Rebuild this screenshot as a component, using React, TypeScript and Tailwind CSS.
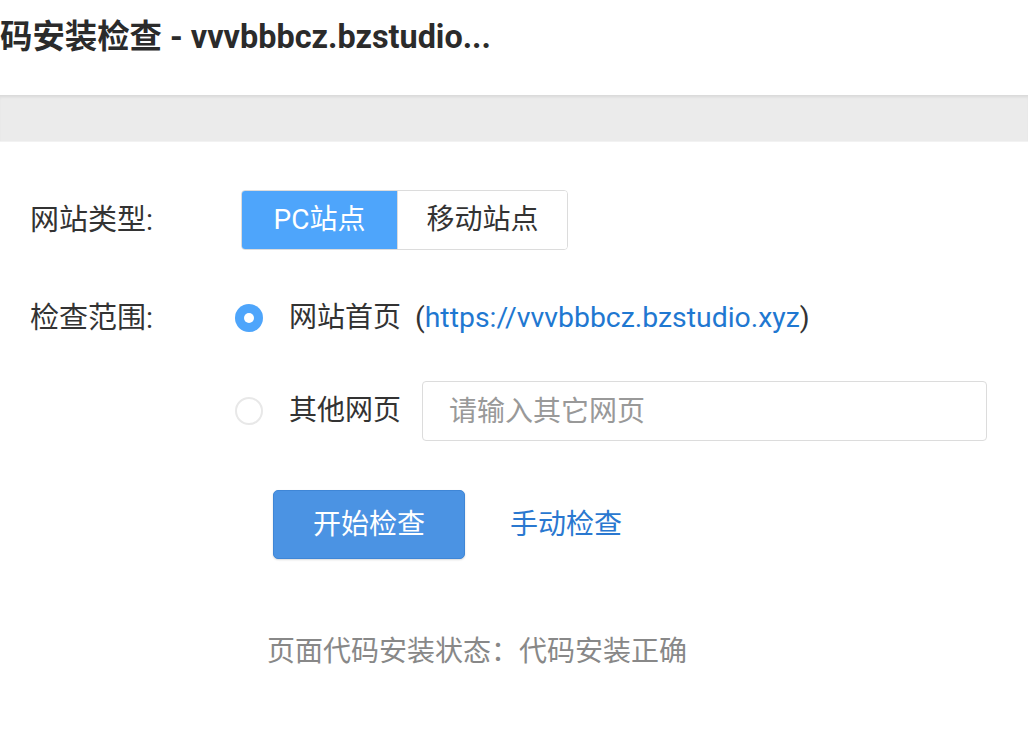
import { useState } from 'react';

const cjk = "font-['Roboto','Noto_Sans_CJK_SC',sans-serif]";

export default function App() {
    const [siteType, setSiteType] = useState<'pc' | 'mobile'>('pc');
    const [scope, setScope] = useState<'home' | 'other'>('home');

    return (
        <div className={`w-[1028px] h-[739px] overflow-hidden bg-white text-[#333] ${cjk}`}>
            {/* Header */}
            <div className="h-[95px] flex items-start pt-[13px] overflow-hidden">
                <h1 className="text-[32.4px] leading-[48px] font-bold text-[#2b2b2b] whitespace-nowrap">
                    码安装检查 - vvvbbbcz.bzstudio...
                </h1>
            </div>

            {/* Gray strip */}
            <div className="h-[47px] bg-[#ebebeb] shadow-[inset_0_3px_3px_-1px_rgba(0,0,0,0.08)] border-b border-[#f2f2f2]" />

            {/* Form */}
            <div className="pl-[30px] pt-[48px]">
                {/* Site type */}
                <div className="flex items-center h-[60px]">
                    <div className="w-[211px] text-[29px] leading-none text-[#333]">网站类型:</div>
                    <div className="flex h-[60px] rounded-[4px] overflow-hidden border border-[#dcdcdc]">
                        <button
                            onClick={() => setSiteType('pc')}
                            className={`w-[155px] text-[28px] ${siteType === 'pc' ? 'bg-[#4ea5fb] text-white' : 'bg-white text-[#333]'}`}
                        >
                            PC站点
                        </button>
                        <button
                            onClick={() => setSiteType('mobile')}
                            className={`w-[170px] text-[28px] border-l border-[#dcdcdc] ${siteType === 'mobile' ? 'bg-[#4ea5fb] text-white' : 'bg-white text-[#333]'}`}
                        >
                            移动站点
                        </button>
                    </div>
                </div>

                {/* Scope */}
                <div className="flex items-center h-[40px] mt-[48px]">
                    <div className="w-[205px] text-[29px] leading-none text-[#333]">检查范围:</div>
                    <button onClick={() => setScope('home')} className="flex items-center">
                        <Radio checked={scope === 'home'} />
                        <span className="ml-[26px] text-[28px] text-[#333]">网站首页</span>
                    </button>
                    <span className="ml-[14px] text-[28.4px] text-[#333]">
                        (<a className="text-[#1f78d1]">https://vvvbbbcz.bzstudio.xyz</a>)
                    </span>
                </div>

                <div className="flex items-center h-[60px] mt-[43px] pl-[205px]">
                    <button onClick={() => setScope('other')} className="flex items-center">
                        <Radio checked={scope === 'other'} />
                        <span className="ml-[26px] text-[28px] text-[#333]">其他网页</span>
                    </button>
                    <input
                        placeholder="请输入其它网页"
                        className="ml-[21px] w-[565px] h-[60px] rounded-[4px] border border-[#dcdcdc] px-[26px] text-[28px] text-[#333] placeholder:text-[#999] outline-none"
                    />
                </div>

                {/* Actions */}
                <div className="flex items-center mt-[49px] pl-[243px]">
                    <button className="w-[192px] h-[69px] rounded-[5px] bg-[#4b93e3] border border-[#3f86d6] text-white text-[28px] shadow-[0_1px_2px_rgba(0,0,0,0.15)]">
                        开始检查
                    </button>
                    <a className="ml-[45px] text-[28px] text-[#2a78d0]">手动检查</a>
                </div>

                <div className="mt-[72px] pl-[237px] text-[28px] text-[#888]">
                    页面代码安装状态：代码安装正确
                </div>
            </div>
        </div>
    );
}

function Radio({ checked }: { checked: boolean }) {
    return checked ? (
        <span className="w-[28px] h-[28px] rounded-full bg-[#4ea5fb] flex items-center justify-center">
            <span className="w-[10px] h-[10px] rounded-full bg-white" />
        </span>
    ) : (
        <span className="w-[28px] h-[28px] rounded-full border-2 border-[#e8e8e8] bg-white" />
    );
}
